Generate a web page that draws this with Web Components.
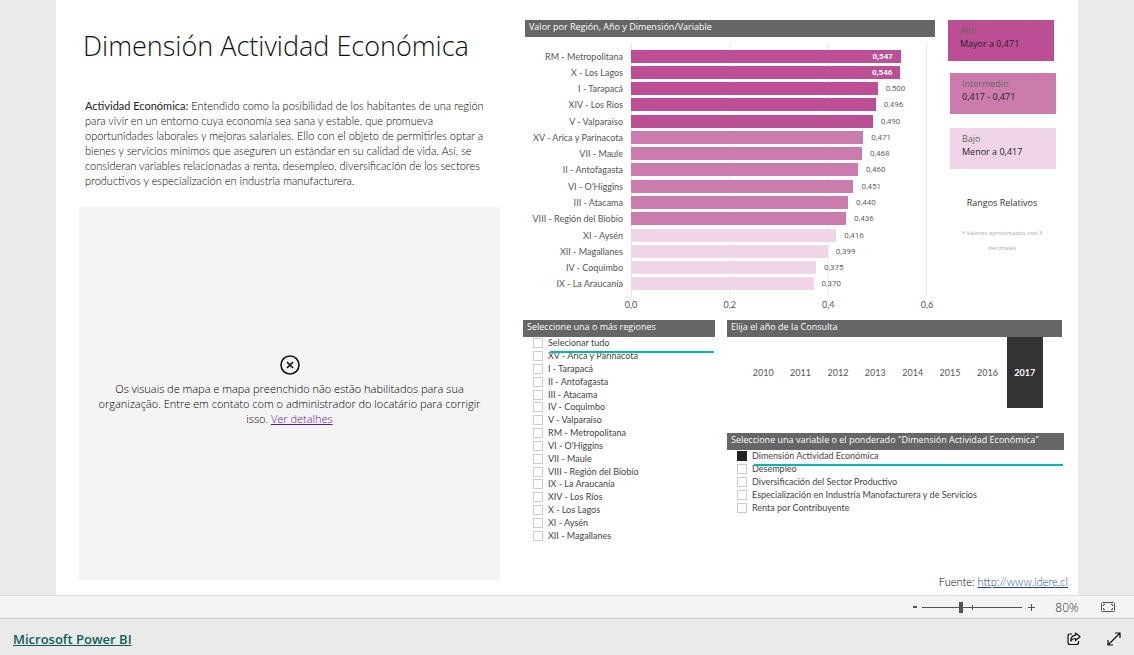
<!DOCTYPE html>
<html lang="es">
<head>
<meta charset="utf-8">
<title>Dimensión Actividad Económica</title>
<style>
  html, body { margin: 0; height: 100%; }
  body { font-family: "Open Sans", "Noto Sans", sans-serif; font-size: 9px; line-height: 13px; color: #333; background: #eaeaea; }
</style>
</head>
<body>
<report-app></report-app>

<template id="report-app">
  <style>
    :host { display: flex; flex-direction: column; min-height: 100vh; --compact: Lato, "Liberation Sans", sans-serif; }
    main { flex: 1; display: grid; grid-template-columns: 421fr 541fr; column-gap: 23px; margin: 0 56px; padding: 0 14px 0 23px; background: #fff; }
    .intro { display: flex; flex-direction: column; padding-bottom: 15px; min-width: 0; }
    h1 { margin: 0; padding: 28px 0 0 4px; font-size: 27px; line-height: 36px; font-weight: 300; color: #111; white-space: nowrap; }
    .intro p { margin: 0; padding: 34px 0 19px 6px; font-family: var(--compact); font-size: 11px; line-height: 15px; font-weight: 300; color: #000; white-space: nowrap; }
    .intro b { font-weight: 400; color: #222; }
    map-notice { flex: 1; }
    .data { display: flex; flex-direction: column; padding: 20px 0 6px; min-width: 0; }
    .top { display: grid; grid-template-columns: 1fr 108px; column-gap: 13px; padding: 0 8px 0 2px; }
    .filters { display: grid; grid-template-columns: 192fr 337fr; column-gap: 12px; margin-top: 8px; }
    .side { display: flex; flex-direction: column; gap: 25px; }
    year-slicer { margin-right: 2px; }
    .source { margin: auto -4px 0 0; text-align: right; font-family: var(--compact); font-size: 11px; line-height: 15px; font-weight: 300; color: #000; }
    .source a { color: #1f45a0; }
  </style>
  <main>
    <section class="intro">
      <h1>Dimensión Actividad Económica</h1>
      <p><b>Actividad Económica:</b> Entendido como la posibilidad de los habitantes de una región<br>para vivir en un entorno cuya economía sea sana y estable, que promueva<br>oportunidades laborales y mejoras salariales. Ello con el objeto de permitirles optar a<br>bienes y servicios mínimos que aseguren un estándar en su calidad de vida. Así, se<br>consideran variables relacionadas a renta, desempleo, diversificación de los sectores<br>productivos y especialización en industria manufacturera.</p>
      <map-notice>Os visuais de mapa e mapa preenchido não estão habilitados para sua<br>organização. Entre em contato com o administrador do locatário para corrigir<br>isso. <a slot="link" href="#detalhes">Ver detalhes</a></map-notice>
    </section>
    <section class="data">
      <div class="top">
        <region-chart></region-chart>
        <range-legend></range-legend>
      </div>
      <div class="filters">
        <check-slicer id="regions" heading="Seleccione una o más regiones"></check-slicer>
        <div class="side">
          <year-slicer heading="Elija el año de la Consulta"></year-slicer>
          <check-slicer id="variables" heading='Seleccione una variable o el ponderado "Dimensión Actividad Económica"'></check-slicer>
        </div>
      </div>
      <div class="source">Fuente: <a href="http://www.idere.cl">http://www.idere.cl</a></div>
    </section>
  </main>
  <zoom-bar></zoom-bar>
  <embed-footer></embed-footer>
</template>

<template id="panel-title">
  <style>
    :host { display: block; height: 17px; padding: 0 4px; background: #666; color: #fff; font-size: 9px; line-height: 14px; font-weight: 500; white-space: nowrap; box-sizing: border-box; }
  </style>
  <slot></slot>
</template>

<template id="map-notice">
  <style>
    :host { display: flex; flex-direction: column; align-items: center; justify-content: center; background: #f4f4f4; color: #000; font-size: 11px; line-height: 15px; font-weight: 300; text-align: center; }
    svg { display: block; margin: 0 0 6px; }
    div { white-space: nowrap; padding-bottom: 6px; }
    ::slotted(a) { color: #5a1a9a; }
  </style>
  <svg width="20" height="20" viewBox="0 0 20 20" fill="none" stroke="#111" aria-hidden="true"><circle cx="10" cy="10" r="9" stroke-width="1.6"/><path d="M7 7l6 6M13 7l-6 6" stroke-width="1.700"/></svg>
  <div><slot></slot><slot name="link"></slot></div>
</template>

<template id="region-chart">
  <style>
    :host { display: block; font-family: var(--compact); }
    .chart { display: grid; grid-template-columns: 98px 1fr; column-gap: 8px; margin-top: 6px; padding-right: 8px; }
    panel-title { font-family: "Open Sans", sans-serif; }
    .labels, .plot { display: grid; grid-auto-rows: 1fr; height: 244px; padding: 5px 0; }
    .labels span { display: flex; align-items: center; justify-content: flex-end; color: #555; white-space: nowrap; }
    .plot { background: linear-gradient(to right, #e8e8e8 1px, transparent 1px) 0 0 / calc((100% - 1px) / 3) 100%; }
    .row { display: flex; align-items: center; gap: 8px; font-family: Roboto, sans-serif; font-size: 8px; color: #666; }
    .bar { height: 13px; width: calc(var(--v) / 0.6 * 100%); background: var(--c); box-sizing: border-box; padding-right: 8px; text-align: right; color: #fff; font-weight: 700; }
    .axis { display: flex; justify-content: space-between; margin: 0 -10px; color: #555; grid-column: 2; line-height: 15px; }
    .axis span { width: 20px; text-align: center; }
  </style>
  <panel-title>Valor por Región, Año y Dimensión/Variable</panel-title>
  <div class="chart">
    <div class="labels"></div>
    <div class="plot"></div>
    <div class="axis"><span>0,0</span><span>0,2</span><span>0,4</span><span>0,6</span></div>
  </div>
</template>

<template id="range-legend">
  <style>
    :host { display: flex; flex-direction: column; }
    .card { height: 41px; width: 106px; box-sizing: border-box; padding: 4px 12px; line-height: 13px; color: #666; }
    .card strong { display: block; font-weight: 400; color: #252423; }
    .high { background: #bc4e93; }
    .mid { background: #cb7bac; margin: 12px 0 14px 2px; }
    .low { background: #efd5e6; margin-left: 2px; }
    p { margin: 0; text-align: center; line-height: 15px; }
    .caption { margin-top: 26px; }
    .note { margin-top: 16px; font-size: 6px; color: #aaa; }
  </style>
  <div class="card high">Alto<strong>Mayor a 0,471</strong></div>
  <div class="card mid">Intermedio<strong>0,417 - 0,471</strong></div>
  <div class="card low">Bajo<strong>Menor a 0,417</strong></div>
  <p class="caption">Rangos Relativos</p>
  <p class="note">* Valores aproximados con 3<br>decimales</p>
</template>

<template id="check-slicer">
  <style>
    :host { display: block; position: relative; }
    .list { display: grid; grid-auto-rows: 1fr; padding: 0 0 0 10px; font-family: var(--compact); }
    label { display: flex; align-items: center; gap: 5px; color: #444; white-space: nowrap; min-height: 0; line-height: 12px; }
    input { appearance: none; box-sizing: border-box; flex: none; width: 10px; height: 10px; margin: 0; border: 1px solid #ccc; background: #fff; }
    input:checked { background: #222; border-color: #222; }
    .rule { position: absolute; top: 31px; left: 27px; right: 1px; height: 2px; background: #01b8aa; }
  </style>
  <panel-title></panel-title>
  <div class="list"></div>
  <div class="rule"></div>
</template>

<template id="year-slicer">
  <style>
    :host { display: block; }
    .tiles { display: grid; grid-template-columns: repeat(8, 1fr); height: 71px; padding: 0 18px; font-family: var(--compact); }
    button { appearance: none; border: 0; margin: 0 1px 0 0; padding: 0; background: none; font: inherit; color: #555; }
    button[aria-pressed="true"] { background: #333; color: #fff; font-weight: 700; }
  </style>
  <panel-title></panel-title>
  <div class="tiles"></div>
</template>

<template id="zoom-bar">
  <style>
    :host { display: flex; align-items: center; justify-content: flex-end; height: 22px; padding-right: 19px; background: #f4f4f4; border-top: 1px solid #ddd; border-bottom: 1px solid #c8c8c8; color: #333; font-size: 12px; }
    button { border: 0; padding: 0; background: none; color: #555; display: flex; }
    .range { display: grid; align-items: center; width: 100px; margin: 0 5px 0 4px; }
    .range > * { grid-area: 1 / 1; }
    i { width: 1px; height: 5px; margin-left: 50px; background: #555; }
    input { appearance: none; width: 100%; height: 11px; margin: 0; background: linear-gradient(#555, #555) center / 100% 1px no-repeat; }
    input::-webkit-slider-thumb { appearance: none; width: 4px; height: 11px; background: #555; }
    output { width: 24px; margin: 0 22px 0 19px; text-align: center; line-height: 15px; font-weight: 300; }
  </style>
  <button aria-label="Alejar"><svg width="6" height="10" viewBox="0 0 6 10"><path d="M1 5h4" stroke="#555" stroke-width="2"/></svg></button>
  <div class="range"><input type="range" min="0" max="100" value="39" aria-label="Zoom"><i></i></div>
  <button aria-label="Acercar"><svg width="9" height="9" viewBox="0 0 9 9"><path d="M1 4.500h7M4.500 1v7" stroke="#555"/></svg></button>
  <output>80%</output>
  <button aria-label="Ajustar a la página"><svg width="14" height="10" viewBox="0 0 14 10" fill="none" stroke="#555"><rect x=".5" y=".5" width="13" height="9" rx="1"/><path d="M2.500 4V2.500H4M10 2.500h1.500V4M11.500 6v1.500H10M4 7.500H2.500V6"/></svg></button>
</template>

<template id="embed-footer">
  <style>
    :host { display: flex; align-items: center; height: 36px; padding: 0 13px; background: #eaeaea; }
    a { color: #0f5f59; font-size: 13px; line-height: 20px; font-weight: 600; margin-right: auto; padding-top: 4px; }
    button { border: 0; padding: 3px 0 0; background: none; display: flex; }
    button + button { margin-left: 26px; }
  </style>
  <a href="https://powerbi.microsoft.com">Microsoft Power BI</a>
  <button aria-label="Compartir"><svg width="14" height="14" viewBox="0 0 14 14" fill="none" stroke="#111" stroke-linejoin="round"><path stroke-width="1.200" d="M5 2H3Q1 2 1 4v6.500q0 2 2 2h6.500q2 0 2-2V9"/><path stroke-width="1.200" d="M8.500 1l4.500 3.800-4.500 3.700V6.500Q5.500 6.300 3.800 9 4 3.500 8.500 3.200z"/></svg></button>
  <button aria-label="Pantalla completa"><svg width="14" height="14" viewBox="0 0 14 14" fill="none" stroke="#111" stroke-width="1.200"><path d="M1 13L13 1M8 1h5v5M1 8v5h5"/></svg></button>
</template>

<script>
  const define = (name, setup) => customElements.define(name, class extends HTMLElement {
    constructor() {
      super();
      this.attachShadow({ mode: 'open' }).append(document.getElementById(name).content.cloneNode(true));
    }
    connectedCallback() { if (setup && !this.ready) { this.ready = true; setup(this, this.shadowRoot); } }
  });

  const el = (tag, props = {}, ...kids) => {
    const node = Object.assign(document.createElement(tag), props);
    node.append(...kids);
    return node;
  };

  const VALUES = [
    ['RM - Metropolitana', 547], ['X - Los Lagos', 546], ['I - Tarapacá', 500], ['XIV - Los Ríos', 496],
    ['V - Valparaíso', 490], ['XV - Arica y Parinacota', 471], ['VII - Maule', 468], ['II - Antofagasta', 460],
    ['VI - O\'Higgins', 451], ['III - Atacama', 440], ['VIII - Región del Biobío', 436], ['XI - Aysén', 416],
    ['XII - Magallanes', 399], ['IV - Coquimbo', 375], ['IX - La Araucanía', 370]
  ];

  const LISTS = {
    regions: ['Selecionar tudo', 'XV - Arica y Parinacota', 'I - Tarapacá', 'II - Antofagasta', 'III - Atacama',
      'IV - Coquimbo', 'V - Valparaíso', 'RM - Metropolitana', 'VI - O\'Higgins', 'VII - Maule',
      'VIII - Región del Biobío', 'IX - La Araucanía', 'XIV - Los Ríos', 'X - Los Lagos', 'XI - Aysén', 'XII - Magallanes'],
    variables: ['Dimensión Actividad Económica', 'Desempleo', 'Diversificación del Sector Productivo',
      'Especialización en Industria Manofacturera y de Servicios', 'Renta por Contribuyente']
  };

  define('panel-title');
  define('map-notice');
  define('range-legend');
  define('zoom-bar');
  define('embed-footer');

  define('region-chart', (host, root) => {
    for (const [name, value] of VALUES) {
      root.querySelector('.labels').append(el('span', {}, name));
      const inside = value > 540;
      const text = '0,' + value;
      const bar = el('div', { className: 'bar' }, inside ? text : '');
      bar.style.setProperty('--v', value / 1000);
      bar.style.setProperty('--c', value > 471 ? '#bc4e93' : value > 416 ? '#cb7bac' : '#efd5e6');
      root.querySelector('.plot').append(el('div', { className: 'row' }, bar, ...(inside ? [] : [el('span', {}, text)])));
    }
  });

  define('check-slicer', (host, root) => {
    root.querySelector('panel-title').textContent = host.getAttribute('heading');
    const items = LISTS[host.id];
    const list = root.querySelector('.list');
    list.style.height = Math.round(items.length * 12.8) + 'px';
    items.forEach((item, i) => list.append(
      el('label', {}, el('input', { type: 'checkbox', checked: host.id === 'variables' && i === 0 }), item)));
  });

  define('year-slicer', (host, root) => {
    root.querySelector('panel-title').textContent = host.getAttribute('heading');
    for (let year = 2010; year <= 2017; year++) {
      root.querySelector('.tiles').append(el('button', { type: 'button', ariaPressed: String(year === 2017) }, String(year)));
    }
  });

  define('report-app');
</script>
</body>
</html>
